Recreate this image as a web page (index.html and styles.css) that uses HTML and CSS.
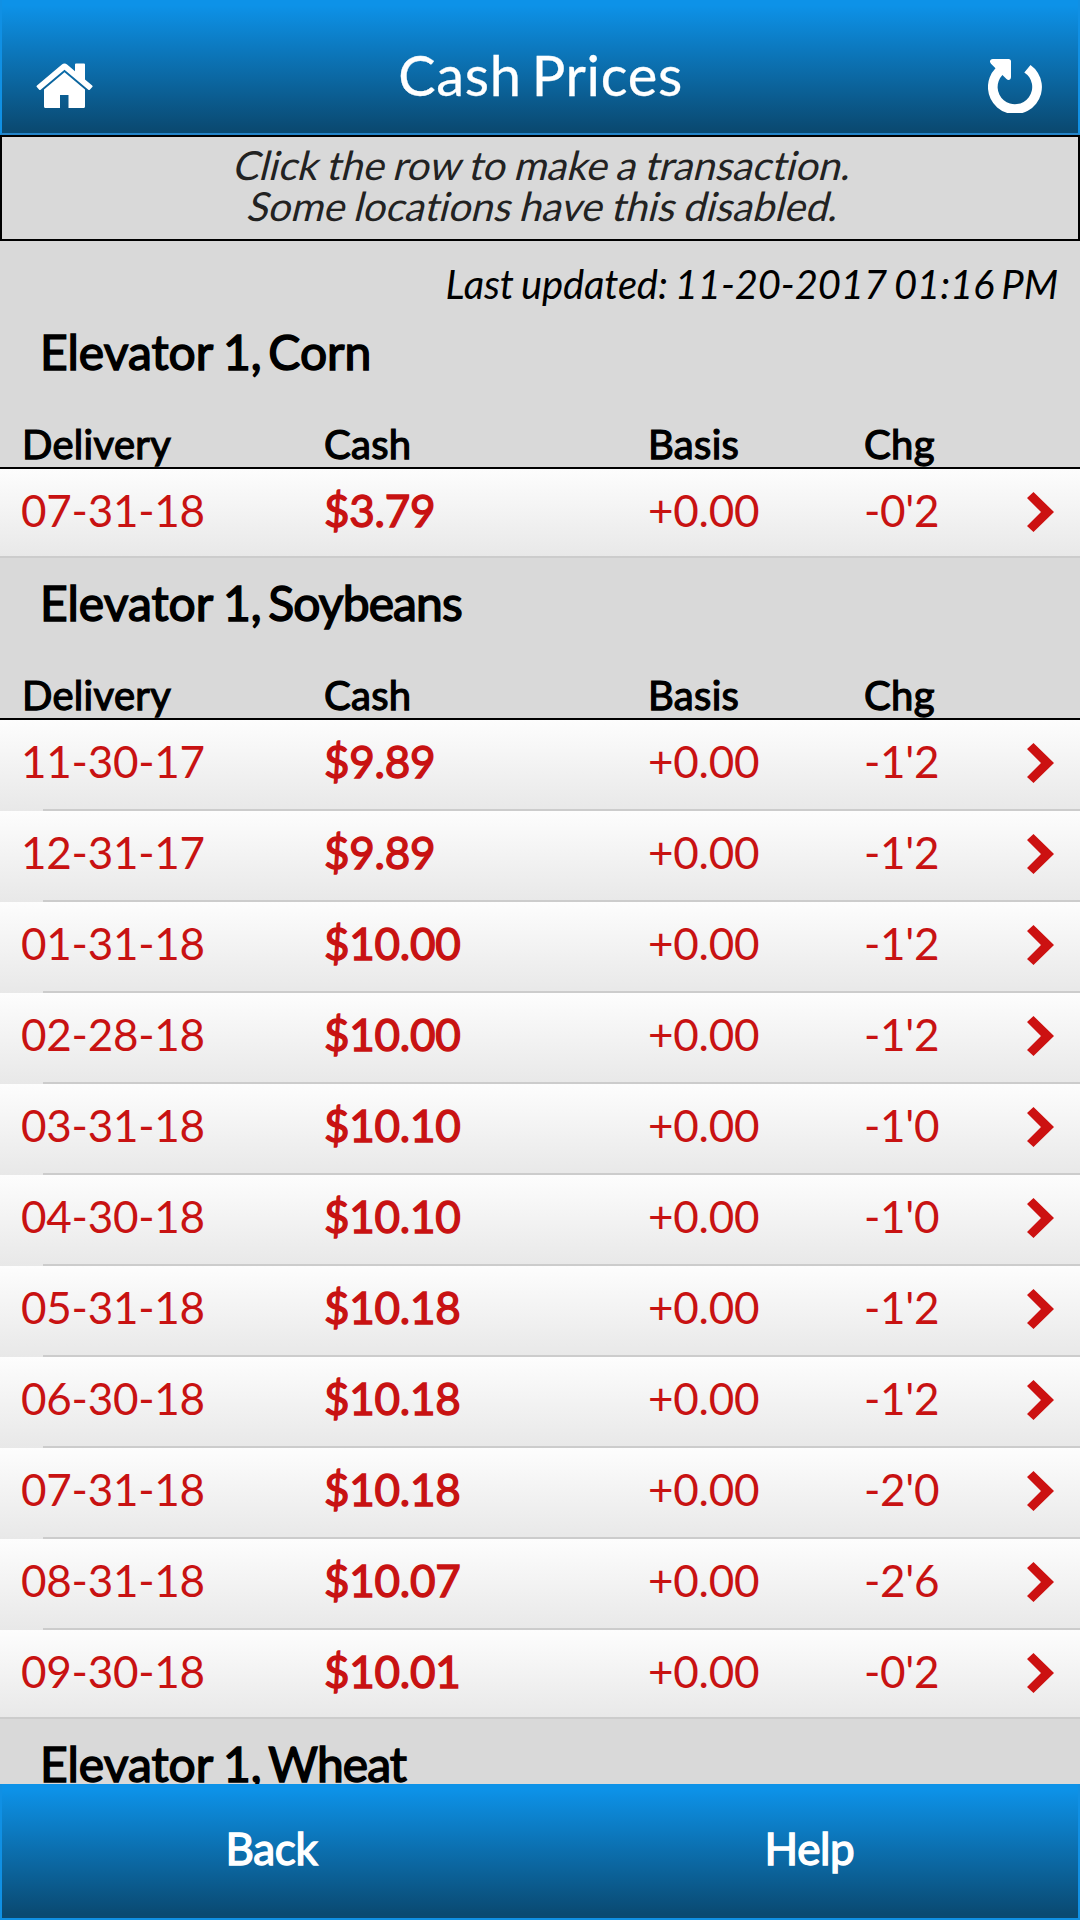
FILE: index.html
```html
<!DOCTYPE html>
<html lang="en">
<head>
<meta charset="utf-8">
<meta name="viewport" content="width=device-width, initial-scale=1">
<title>Cash Prices</title>
<link rel="stylesheet" href="styles.css">
</head>
<body>
<div class="app">
  <header class="bar header">
    <svg class="icon-home" viewBox="0 0 57 45" role="img" aria-label="Home"><path d="M8 26.500 28.500 9.300 49 26.500V43.500Q49 45 47.500 45H32.500V32H24V45H9.500Q8 45 8 43.500Z"/><path d="M1 22.500 25.600 1.700Q28.500-.7 31.400 1.700L39 8.200V1.500Q39 .5 40 .5H48Q49 .5 49 1.500V16.600L56.200 22.600Q57 23.300 56.300 24.100L53.800 26.700Q53.100 27.400 52.300 26.700L28.500 6.700 4.700 26.700Q3.900 27.400 3.200 26.700L.8 24.100Q.1 23.300 1 22.500Z"/></svg>
    <h1 class="title">Cash Prices</h1>
    <svg class="icon-refresh" viewBox="0 0 54 54" role="img" aria-label="Refresh"><path d="M42.500 6A27 27 0 1 1 7.500 9.300L3 4.800C1 2.800 2.200 0 4.800 0H20.500Q23 0 23 2.500V18C23 20.800 20.400 21.800 18.500 20L14.400 16A17.300 17.300 0 1 0 36.300 13.400Z"/></svg>
  </header>
  <div class="notice"><span class="slant">Click the row to make a transaction.</span><span class="slant">Some locations have this disabled.</span></div>
  <main class="prices" id="prices"><p class="updated">Last updated: 11-20-2017 01:16 PM</p></main>
  <footer class="bar footer"><a class="action">Back</a><a class="action">Help</a></footer>
</div>
<script src="prices.js"></script>
</body>
</html>
```
FILE: styles.css
```css
* { box-sizing: border-box; }
body { margin: 0; font-family: Lato, "Liberation Sans", sans-serif; font-variant-ligatures: none; background: #d9d9d9; color: #000; }
.app { display: flex; flex-direction: column; height: 1920px; overflow: hidden; }
.bar { flex: none; display: flex; border: 2px solid #1090e4; border-top: 0; background: linear-gradient(#0d92e8 0, #0d92e8 4%, #0a4a72 97%, #0a4a72); color: #fff; }
.header { height: 135px; padding: 0 36px 0 34px; justify-content: space-between; align-items: flex-start; border-bottom-color: #2484c9; }
.icon-home { width: 57px; height: 45px; margin-top: 63px; fill: #fff; }
.icon-refresh { width: 54px; height: 54px; margin-top: 59px; fill: #fff; }
.title { margin: 41px 0 0; font-size: 56px; line-height: 68px; font-weight: 400; letter-spacing: 0.7px; word-spacing: -5px; -webkit-text-stroke: 0.3px #fff; }
.notice { flex: none; height: 106px; padding: 7.5px 0 0 8px; display: flex; flex-direction: column; align-items: center; border: 2px solid #000; font-size: 40px; line-height: 41px; word-spacing: -1.5px; color: #222; }
.slant { transform: skewX(-14deg); }
.prices { flex: 1; min-height: 0; overflow: hidden; }
.updated { margin: 0; height: 66px; padding: 19px 22px 0 0; text-align: right; font-size: 40px; line-height: 48px; font-style: italic; letter-spacing: -0.15px; word-spacing: -2.1px; }
.commodity { margin: 0; height: 116px; padding: 16px 0 0 40px; font-size: 48px; line-height: 58px; font-weight: 400; word-spacing: -1.6px; -webkit-text-stroke: 1.5px #000; }
.crop { margin-left: -4px; }
.crop-tight { margin-left: -4px; letter-spacing: -0.9px; }
.row { display: grid; grid-template-columns: 302px 324px 216px 216px; padding-left: 22px; }
.columns { height: 46px; border-bottom: 2px solid #000; font-size: 40px; line-height: 42px; letter-spacing: 0.3px; }
.columns span { -webkit-text-stroke: 1.25px #000; }
.entry { position: relative; height: 91px; grid-template-columns: 303px 324px 216px 216px; padding-left: 21px; font-size: 44px; line-height: 82px; letter-spacing: -0.25px; color: #c81212; background: linear-gradient(#fdfdfd, #e8e8e8); }
.entry::after { content: ""; position: absolute; left: 43px; right: 0; bottom: 0; height: 2px; background: #ccc; }
.entry:last-child { height: 89px; }
.entry:last-child::after { left: 0; }
.cash { -webkit-text-stroke: 1.4px #c81212; }
.chevron { position: absolute; left: 1027px; top: 23px; width: 27px; height: 40px; fill: #cc1111; }
.action { flex: 1; padding-left: 1px; text-align: center; font-size: 44px; line-height: 128px; letter-spacing: -0.35px; -webkit-text-stroke: 1.4px #fff; }
.footer { height: 136px; }
```
FILE: prices.js
```js
const groups = [
  ["Corn", "crop", [["07-31-18", "$3.79", "-0'2"]]],
  ["Soybeans", "crop-tight", [
    ["11-30-17", "$9.89", "-1'2"], ["12-31-17", "$9.89", "-1'2"], ["01-31-18", "$10.00", "-1'2"],
    ["02-28-18", "$10.00", "-1'2"], ["03-31-18", "$10.10", "-1'0"], ["04-30-18", "$10.10", "-1'0"],
    ["05-31-18", "$10.18", "-1'2"], ["06-30-18", "$10.18", "-1'2"], ["07-31-18", "$10.18", "-2'0"],
    ["08-31-18", "$10.07", "-2'6"], ["09-30-18", "$10.01", "-0'2"]]],
  ["Wheat", "crop-tight", []]
];
const main = document.getElementById("prices");
for (const [crop, style, rows] of groups) {
  const columns = rows.length ? '<div class="row columns"><span>Delivery</span><span>Cash</span><span>Basis</span><span>Chg</span></div>' : "";
  const entries = rows.map(([date, cash, change]) => `<div class="row entry"><span>${date}</span><span class="cash">${cash}</span><span>+0.00</span><span>${change}</span><svg class="chevron" viewBox="0 0 27 40"><path d="M6.500 0 27 20 6.500 40 0 34 14 20 0 6Z"/></svg></div>`).join("");
  main.insertAdjacentHTML("beforeend", `<section><h2 class="commodity">Elevator 1, <span class="${style}">${crop}</span></h2>${columns}${entries}</section>`);
}
```
